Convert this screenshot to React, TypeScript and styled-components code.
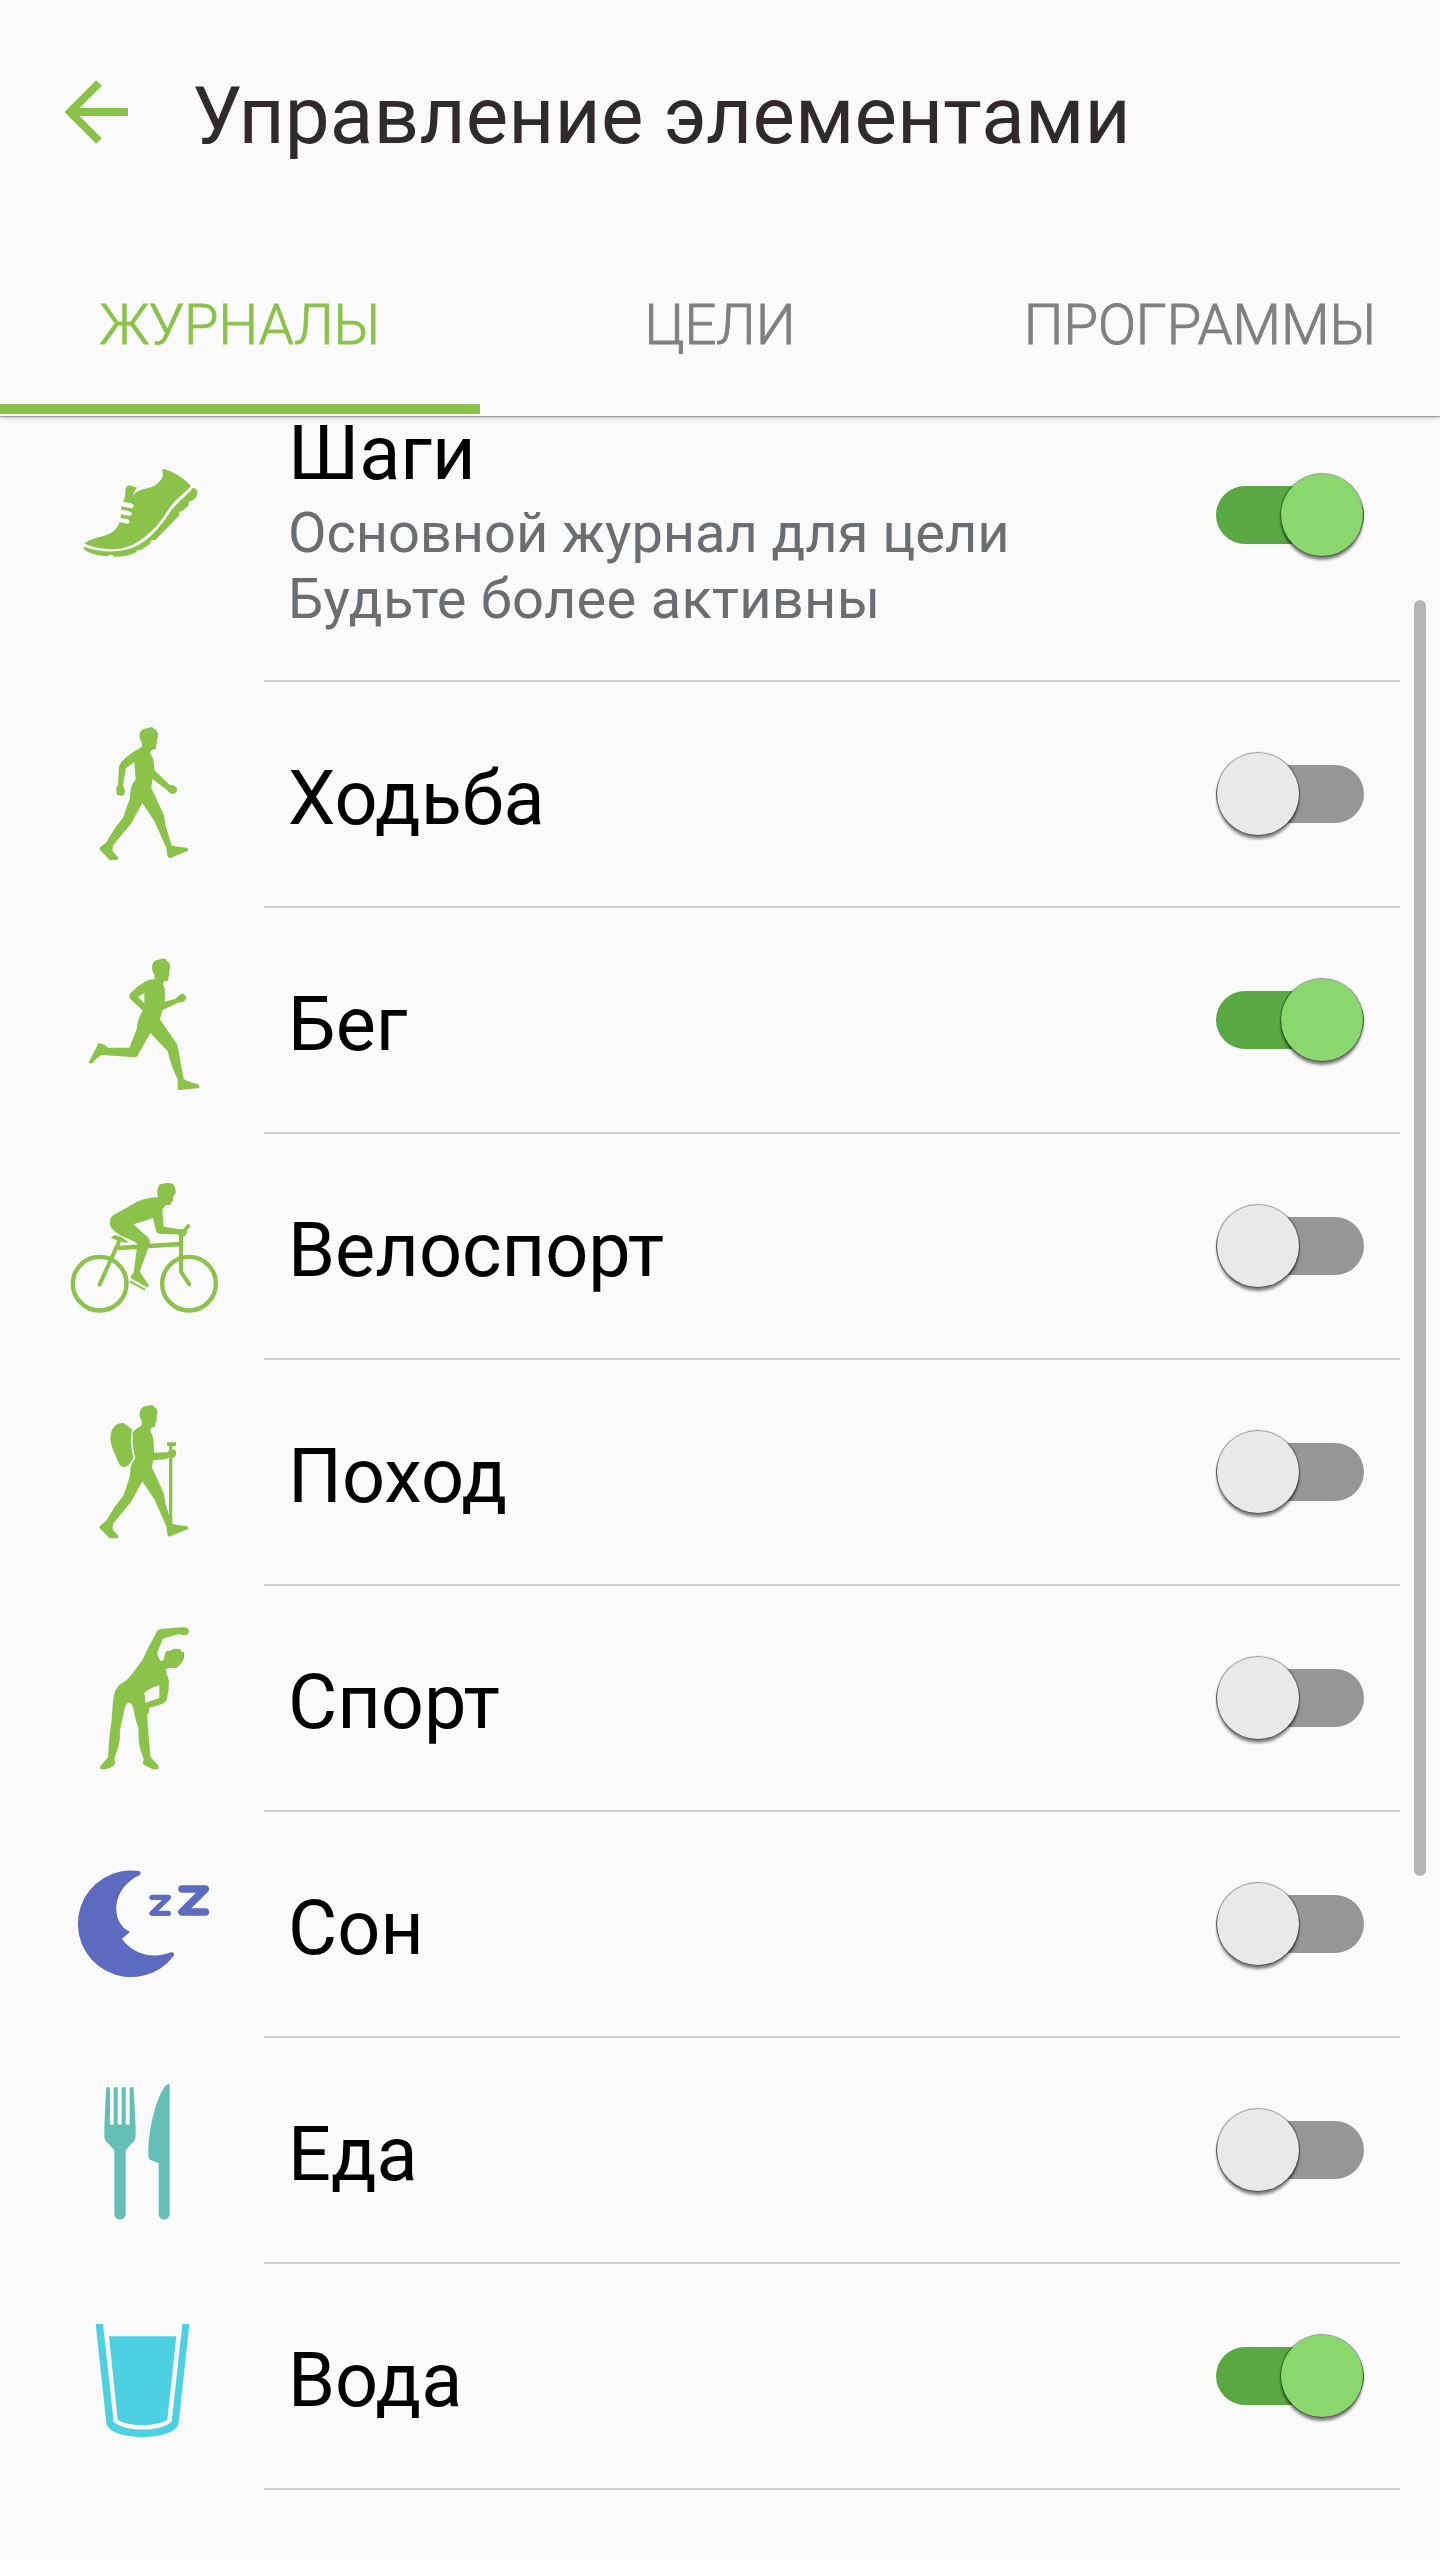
import React, { useState } from 'react';
import styled, { createGlobalStyle } from 'styled-components';

const GREEN = '#8bc34a';
const SURFACE = '#fafafa';

const GlobalStyle = createGlobalStyle`
  html, body { margin: 0; padding: 0; background: ${SURFACE}; }
  *, *::before, *::after { box-sizing: border-box; }
`;

const Screen = styled.div`
  position: relative;
  display: flex;
  flex-direction: column;
  width: 1440px;
  height: 2560px;
  overflow: hidden;
  background: ${SURFACE};
  font-family: Roboto, 'Noto Sans', sans-serif;
`;

const Header = styled.header`
  position: relative;
  z-index: 1;
  flex: none;
  display: flex;
  flex-direction: column;
  height: 416px;
  background: ${SURFACE};
  box-shadow: 0 1px 1px rgba(0, 0, 0, 0.28), 0 2px 5px rgba(0, 0, 0, 0.18);
`;

const TitleBar = styled.div`
  display: flex;
  align-items: center;
  height: 224px;
  padding-left: 60px;
`;

const BackButton = styled.button`
  display: flex;
  width: 72px;
  height: 72px;
  margin-right: 60px;
  padding: 0;
  border: 0;
  background: none;
`;

const Title = styled.h1`
  margin: 0;
  padding-top: 7px;
  font-size: 80px;
  font-weight: 400;
  line-height: 94px;
  letter-spacing: 0.14px;
  color: #302b2b;
  white-space: nowrap;
`;

const Tabs = styled.nav`
  display: flex;
  height: 192px;
`;

const Tab = styled.button<{ $active: boolean }>`
  flex: 1;
  padding: 22px 0 0;
  border: 0;
  border-bottom: 10px solid ${(p) => (p.$active ? GREEN : 'transparent')};
  margin-bottom: 2px;
  background: none;
  font: 300 56px/66px Roboto, sans-serif;
  color: ${(p) => (p.$active ? GREEN : '#808080')};
  -webkit-text-stroke: 0.9px currentColor;
  white-space: nowrap;
`;

const List = styled.ul`
  flex: 1;
  display: flex;
  flex-direction: column;
  margin: -66px 0 0;
  padding: 0;
  list-style: none;
  overflow: hidden;
`;

const Row = styled.li<{ $tall: boolean }>`
  flex: none;
  display: flex;
  align-items: stretch;
  height: ${(p) => (p.$tall ? 332 : 226)}px;
  padding-right: 40px;
`;

const IconCell = styled.div`
  display: flex;
  align-items: center;
  width: 264px;
  padding: 0 0 2px 60px;
`;

const RowBody = styled.div`
  flex: 1;
  display: flex;
  align-items: center;
  justify-content: space-between;
  padding: 0 36px 0 24px;
  border-bottom: 2px solid #cdcdcd;
`;

const Labels = styled.div<{ $tall: boolean }>`
  display: flex;
  flex-direction: column;
  gap: 2px;
  padding-top: ${(p) => (p.$tall ? 9 : 7)}px;
`;

const Name = styled.span`
  font-size: 75.6px;
  line-height: 90px;
  color: #000;
`;

const Note = styled.span`
  display: flex;
  flex-direction: column;
  font-size: 56px;
  line-height: 66px;
  color: #6b6e71;
`;

const NoteLine = styled.span<{ $tracking: number }>`
  letter-spacing: ${(p) => p.$tracking}px;
`;

const Track = styled.button<{ $on: boolean }>`
  display: flex;
  align-items: center;
  justify-content: ${(p) => (p.$on ? 'flex-end' : 'flex-start')};
  width: 148px;
  height: 58px;
  padding: 0;
  border: 0;
  border-radius: 29px;
  background: ${(p) => (p.$on ? '#5aa843' : '#969696')};
`;

const Thumb = styled.span<{ $on: boolean }>`
  flex: none;
  width: 82px;
  height: 82px;
  margin: 0 1px;
  border-radius: 50%;
  background: ${(p) => (p.$on ? '#8ad76e' : '#e9e9e9')};
  box-shadow: 0 0 1px 1px rgba(0, 0, 0, 0.4), 0 4px 3px rgba(0, 0, 0, 0.48);
`;

const ScrollThumb = styled.div`
  position: absolute;
  top: 600px;
  left: 1414px;
  width: 12px;
  height: 1276px;
  border-radius: 6px;
  background: #b3b4b6;
`;

function Glyph({ top, color = GREEN, children }: { top: number; color?: string; children: React.ReactNode }) {
  return (
    <svg width="170" height="180" viewBox={`0 ${top} 510 540`} fill={color} stroke="none">
      {children}
    </svg>
  );
}

const legs =
  'L274 234 L312 316 L316 344 L335 406 L352 410 L380 413 Q386 416 384 422 L331 444 Q323 446 322 436 L319 414 L283 333 L247 279 L213 341 L159 406 L158 424 L173 440 Q178 450 169 450 L149 450 L118 418 L120 412 L138 398 L163 357 L190 322 L210 263';

const ShoeIcon = () => (
  <Glyph top={-75}>
    <path d="M310 57 C338 63 368 82 393 107 C383 123 349 143 329 173 C310 201 296 228 255 260 C221 286 192 300 147 297 C113 295 89 288 73 281 C91 262 122 264 148 251 C164 244 174 230 179 216 L202 221 Q210 219 209 213 Q208 209 201 207 L181 204 L183 193 L209 198 Q216 197 216 190 Q214 185 205 183 L183 179 L184 169 L214 175 Q222 174 222 167 Q220 162 211 159 L189 155 C196 145 196 134 196 120 Q198 104 215 107 L231 113 Q221 122 218 138 Q230 121 252 117 C278 113 295 105 307 82 Q311 71 306 60 Z" />
    <path d="M72 290 C112 306 180 311 221 292 C266 272 300 233 326 193 C347 159 376 142 399 113 Q415 117 412 131 Q407 150 391 153 L385 158 L387 164 L372 180 L362 184 L357 188 L357 197 L286 270 L274 271 L270 282 L243 300 L234 299 L226 308 Q200 320 163 320 L156 314 L147 315 L144 319 Q105 316 83 305 Q68 297 72 290 Z" />
  </Glyph>
);

const WalkIcon = () => (
  <Glyph top={-18}>
    <path d={`M245 111 L246 98 C235 84 237 66 246 60 C257 53 265 56 272 51 Q280 51 282 56 Q291 58 294 72 Q295 83 290 90 L292 99 L289 103 L288 116 Q285 120 276 119 L270 130 Q283 144 283 180 L329 225 Q348 225 352 238 Q349 251 339 252 Q328 251 321 240 L277 207 ${legs} Q209 229 227 208 L223 157 L198 174 L189 225 L195 243 Q195 257 185 258 L173 255 Q167 249 169 232 L174 224 L177 170 Q180 157 200 141 Q220 124 245 111 Z`} />
  </Glyph>
);

const RunIcon = () => (
  <Glyph top={-30}>
    <path
      fillRule="evenodd"
      d="M283 118 L284 106 C273 91 274 71 284 63 C294 57 303 60 309 55 Q318 56 321 63 Q330 67 331 81 L327 96 L329 103 L326 108 L325 120 Q321 125 313 123 L309 132 Q317 144 314 185 L346 177 Q357 163 368 161 Q379 163 378 177 Q373 189 357 187 L307 211 L300 238 L352 314 L371 416 Q386 427 411 431 Q421 436 418 444 L360 450 Q352 450 353 443 L353 418 Q333 378 323 334 L271 279 L231 350 L224 352 L126 345 Q112 351 96 370 Q89 372 86 367 L109 323 Q113 310 119 309 L133 314 L144 323 L208 323 L230 268 Q231 236 249 212 L211 177 Q205 170 211 160 Q232 138 258 123 Q267 119 283 118 Z M253 160 L234 171 L253 190 Z"
    />
  </Glyph>
);

const BikeIcon = () => (
  <Glyph top={-42}>
    <g fill="none" stroke={GREEN} strokeWidth="13" strokeLinecap="round" strokeLinejoin="round">
      <circle cx="119" cy="341" r="80.5" />
      <circle cx="387" cy="341" r="80.5" />
      <path d="M119 343 L178 213" strokeWidth="12" />
      <path d="M174 234 L363 222" strokeLinecap="butt" />
      <path d="M363 188 L363 305 L388 343" strokeWidth="12" />
      <path d="M371 184 L385 168" strokeWidth="11" />
    </g>
    <path d="M153 204 Q156 198 164 196 Q180 194 204 216 Q203 220 196 218 L170 211 Z" />
    <path d="M294 82 C290 66 291 48 303 42 L323 39 Q337 38 342 46 Q348 59 347 69 L339 82 L339 91 L330 105 L318 105 L307 119 L311 170 L354 177 Q371 178 380 178 L381 188 L374 199 L364 201 L352 193 L303 192 Q290 191 288 182 L279 144 Q246 156 220 163 L265 203 Q272 212 269 222 L239 305 L266 344 Q268 352 261 352 L212 324 Q210 319 221 309 L232 222 Q224 213 196 203 Q162 189 151 168 Q145 144 162 134 L234 94 Q264 82 294 82 Z" />
    <path d="M211 335 L253 358" stroke={GREEN} strokeWidth="6" strokeLinecap="round" />
  </Glyph>
);

const HikeIcon = () => (
  <Glyph top={-24}>
    <path
      transform="translate(0 -5)"
      d={`M244 112 L246 98 C235 84 237 66 246 58 C257 51 265 53 272 50 Q280 50 283 56 Q291 60 293 72 L289 88 L291 96 L287 103 L286 114 Q282 118 275 118 L271 127 Q283 146 282 193 L322 192 L328 186 Q342 181 348 187 Q350 200 344 206 Q336 210 327 208 L315 213 L280 216 L276 236 ${legs} Q208 230 226 209 Q216 180 218 133 Q220 125 244 112 Z`}
    />
    <path d="M191 99 L216 118 Q209 155 220 203 Q211 226 194 231 Q184 231 179 225 C171 201 150 169 151 143 Q154 98 191 99 Z" />
    <path d="M321 157 H348 V168 H337 V410 H327 V168 H321 Z" />
  </Glyph>
);

const SportIcon = () => (
  <Glyph top={-6}>
    <path
      fillRule="evenodd"
      d="M300 57 L366 52 Q387 51 387 63 Q387 75 375 75 Q364 76 357 72 L309 86 L292 126 Q293 145 304 154 L312 148 Q314 126 321 122 L330 123 Q341 113 361 118 L366 126 L372 126 L372 145 Q368 159 353 170 L348 175 L327 173 L318 178 Q318 187 327 211 Q328 240 320 270 Q317 278 307 281 L268 294 L267 308 L261 313 L271 440 L293 464 Q298 470 295 478 L277 478 L249 463 Q248 454 251 447 Q236 410 236 385 L235 354 Q223 318 220 293 Q211 276 206 278 Q198 279 193 299 L180 361 L179 391 Q174 419 163 446 Q166 457 164 464 Q151 478 123 478 Q118 475 121 469 L144 442 L147 397 Q148 365 154 339 L159 275 Q162 233 185 220 Q203 211 214 195 L248 149 Q264 112 290 66 Q293 59 300 57 Z M298 226 Q263 237 253 249 L257 278 L298 264 Z"
    />
  </Glyph>
);

const SleepIcon = () => (
  <Glyph top={-48} color="#5c6bc0">
    <path d="M237 63 A160 160 0 1 0 341 318 Q345 306 334 307 C278 328 219 313 186 266 L210 246 C148 216 155 114 238 76 Q247 69 237 63 Z" />
    <g fill="none" stroke="#5c6bc0" strokeLinecap="round" strokeLinejoin="round">
      <path d="M276 142 H325 L276 190 H325" strokeWidth="16" />
      <path d="M366 117 H436 L366 186 H436" strokeWidth="23" />
    </g>
  </Glyph>
);

const FoodIcon = () => (
  <Glyph top={-30} color="#66bfb7">
    <path d="M138 57 Q138 51 144 51 Q150 51 150 57 V159 Q150 165 155.500 165 Q161 165 161 159 V57 Q161 51 167 51 Q173 51 173 57 V159 Q173 165 179 165 Q185 165 185 159 V57 Q185 51 191 51 Q197 51 197 57 V159 Q197 165 203 165 Q209 165 209 159 V57 Q209 51 215 51 Q221 51 221 57 L227 172 V197 Q227 206 222 213 L197 241 V432 A17 17 0 0 1 163 432 V241 L138 214 Q133 208 133 197 V172 Z" />
    <path d="M329 45 V432 A16.500 16.500 0 0 1 296 432 V279 L271 270 Q265 268 265 258 C263 185 286 98 306 64 Q318 42 325 42 Q329 42 329 45 Z" />
  </Glyph>
);

const WaterIcon = () => (
  <Glyph top={-42} color="#4dd0e1">
    <path d="M107 72 H129 L161 365 C195 397 302 396 335 365 L367 72 H388 L356 368 C352 424 145 426 139 368 Z" />
    <path d="M147 109 H349 L322 359 C291 380 202 380 173 359 Z" />
  </Glyph>
);

type Line = { text: string; tracking: number };
type Item = { name: string; note?: Line[]; on: boolean; Icon: () => React.JSX.Element };

const items: Item[] = [
  {
    name: 'Шаги',
    note: [
      { text: 'Основной журнал для цели', tracking: -0.05 },
      { text: 'Будьте более активны', tracking: 0.28 },
    ],
    on: true,
    Icon: ShoeIcon,
  },
  { name: 'Ходьба', on: false, Icon: WalkIcon },
  { name: 'Бег', on: true, Icon: RunIcon },
  { name: 'Велоспорт', on: false, Icon: BikeIcon },
  { name: 'Поход', on: false, Icon: HikeIcon },
  { name: 'Спорт', on: false, Icon: SportIcon },
  { name: 'Сон', on: false, Icon: SleepIcon },
  { name: 'Еда', on: false, Icon: FoodIcon },
  { name: 'Вода', on: true, Icon: WaterIcon },
];

const tabs = ['ЖУРНАЛЫ', 'ЦЕЛИ', 'ПРОГРАММЫ'];

export default function App() {
  const [active, setActive] = useState(0);
  const [enabled, setEnabled] = useState(items.map((i) => i.on));
  const toggle = (index: number) => setEnabled((prev) => prev.map((v, i) => (i === index ? !v : v)));

  return (
    <Screen>
      <GlobalStyle />
      <Header>
        <TitleBar>
          <BackButton aria-label="Назад">
            <svg width="72" height="72" viewBox="0 0 72 72" fill="none" stroke={GREEN} strokeWidth="8">
              <path d="M39 7 L10 36 L39 65 M10 36 H68" />
            </svg>
          </BackButton>
          <Title>Управление элементами</Title>
        </TitleBar>
        <Tabs>
          {tabs.map((label, i) => (
            <Tab key={label} $active={i === active} onClick={() => setActive(i)}>
              {label}
            </Tab>
          ))}
        </Tabs>
      </Header>
      <List>
        {items.map(({ name, note, Icon }, i) => (
          <Row key={name} $tall={Boolean(note)}>
            <IconCell>
              <Icon />
            </IconCell>
            <RowBody>
              <Labels $tall={Boolean(note)}>
                <Name>{name}</Name>
                {note && (
                  <Note>
                    {note.map((line) => (
                      <NoteLine key={line.text} $tracking={line.tracking}>
                        {line.text}
                      </NoteLine>
                    ))}
                  </Note>
                )}
              </Labels>
              <Track $on={enabled[i]} role="switch" aria-checked={enabled[i]} aria-label={name} onClick={() => toggle(i)}>
                <Thumb $on={enabled[i]} />
              </Track>
            </RowBody>
          </Row>
        ))}
      </List>
      <ScrollThumb />
    </Screen>
  );
}
